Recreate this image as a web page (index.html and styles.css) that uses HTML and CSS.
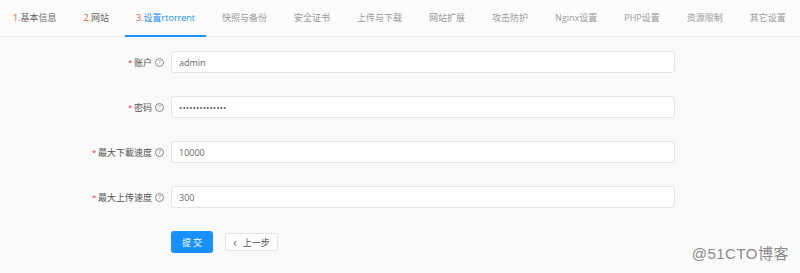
FILE: index.html
```html
<!DOCTYPE html>
<html lang="zh-CN">
<head>
    <meta charset="UTF-8">
    <title>设置rtorrent</title>
    <link rel="stylesheet" href="styles.css">
</head>
<body>
    <div class="tabs">
        <a class="tab"><span class="step">1.</span>基本信息</a>
        <a class="tab"><span class="step">2.</span>网站</a>
        <a class="tab active"><span class="step">3.</span>设置rtorrent</a>
        <a class="tab muted">快照与备份</a>
        <a class="tab muted">安全证书</a>
        <a class="tab muted">上传与下载</a>
        <a class="tab muted">网站扩展</a>
        <a class="tab muted">攻击防护</a>
        <a class="tab muted">Nginx设置</a>
        <a class="tab muted">PHP设置</a>
        <a class="tab muted">资源限制</a>
        <a class="tab muted">其它设置</a>
    </div>

    <form class="form">
        <label class="label" for="user"><span class="req">*</span>账户<span class="tip">?</span></label>
        <input class="field" id="user" type="text" value="admin">

        <label class="label" for="pass"><span class="req">*</span>密码<span class="tip">?</span></label>
        <input class="field" id="pass" type="password" value="admin12345678x">

        <label class="label" for="down"><span class="req">*</span>最大下載速度<span class="tip">?</span></label>
        <input class="field" id="down" type="text" value="10000">

        <label class="label" for="up"><span class="req">*</span>最大上传速度<span class="tip">?</span></label>
        <input class="field" id="up" type="text" value="300">

        <div class="actions">
            <button type="submit" class="btn-primary">提 交</button>
            <button type="button" class="btn-prev"><span class="arrow">&lsaquo;</span>上一步</button>
        </div>
    </form>

    <div class="watermark">@51CTO博客</div>
</body>
</html>
```

FILE: styles.css
```css
body {
    margin: 0;
    padding: 0;
    background-color: #f9f9f9;
    font-family: "Open Sans", "Noto Sans CJK SC", sans-serif;
    font-size: 9px;
    color: #555;
    height: 273px;
    position: relative;
    overflow: hidden;
}
.tabs {
    display: flex;
    height: 36px;
    padding-left: 2px;
    gap: 5px;
    border-bottom: 1px solid #ebebeb;
    background-color: #fbfbfb;
}
.tab {
    display: flex;
    align-items: center;
    padding: 0 11px;
    color: #666;
    border-bottom: 2px solid transparent;
    box-sizing: border-box;
    height: 37px;
    white-space: nowrap;
}
.tab .step {
    color: #f5543a;
}
.tab.active {
    color: #1890ff;
    border-bottom-color: #1890ff;
}
.tab.muted {
    color: #999;
}
.form {
    display: grid;
    grid-template-columns: 165px 504px;
    column-gap: 6px;
    row-gap: 23px;
    margin-top: 14px;
    align-items: center;
}
.label {
    display: flex;
    justify-content: flex-end;
    align-items: center;
    color: #555;
    font-size: 9px;
}
.req {
    color: #f5222d;
    font-size: 7px;
    margin-right: 2px;
}
.tip {
    display: inline-flex;
    justify-content: center;
    align-items: center;
    width: 7px;
    height: 7px;
    border: 1px solid #888;
    border-radius: 50%;
    font-size: 6px;
    color: #777;
    margin-left: 3px;
    margin-right: 1px;
}
.field {
    height: 22px;
    box-sizing: border-box;
    border: 1px solid #e3e3e3;
    border-radius: 3px;
    background-color: #fff;
    padding: 0 7px;
    font-family: "Open Sans", sans-serif;
    font-size: 9px;
    color: #666;
    outline: none;
}
.actions {
    grid-column: 2;
    display: flex;
    align-items: center;
    gap: 12px;
}
.btn-primary {
    width: 42px;
    height: 22px;
    border: none;
    border-radius: 3px;
    background-color: #1890ff;
    color: #fff;
    font-family: "Noto Sans CJK SC", sans-serif;
    font-size: 9px;
    padding: 0;
}
.btn-prev {
    height: 18px;
    width: 53px;
    border: 1px solid #e3e3e3;
    border-radius: 2px;
    background-color: #fff;
    color: #555;
    font-family: "Noto Sans CJK SC", sans-serif;
    font-size: 9px;
    padding: 0;
    display: flex;
    align-items: center;
    justify-content: center;
}
.arrow {
    font-size: 12px;
    margin-right: 6px;
    line-height: 1;
}
.watermark {
    position: absolute;
    right: 11px;
    bottom: 10px;
    font-family: "Liberation Sans", "Noto Sans CJK SC", sans-serif;
    font-size: 15px;
    letter-spacing: 0.5px;
    color: #8a8a8a;
}
```
